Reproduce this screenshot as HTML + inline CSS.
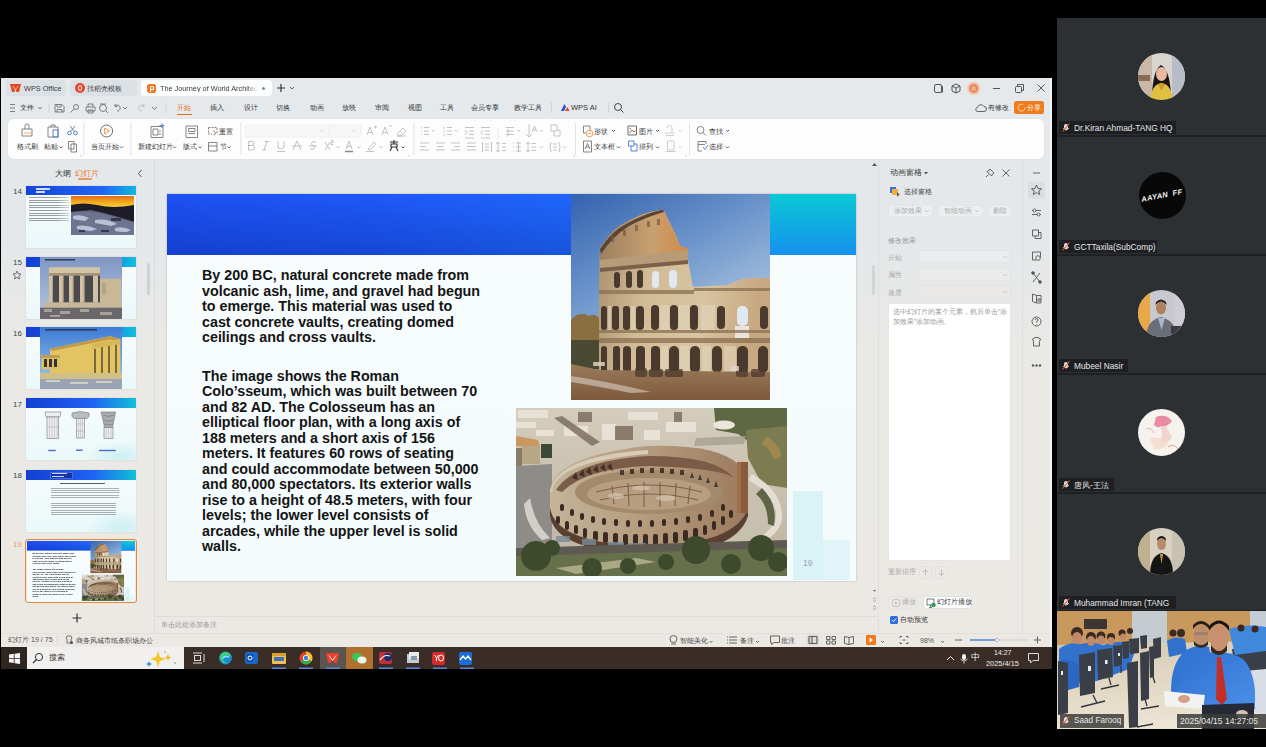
<!DOCTYPE html>
<html><head><meta charset="utf-8">
<style>
*{margin:0;padding:0;box-sizing:border-box}
html,body{width:1266px;height:747px;overflow:hidden;background:#000;font-family:"Liberation Sans",sans-serif;position:relative}
.a{position:absolute}
.t{position:absolute;white-space:nowrap;font-size:8px;color:#3a3a3a;line-height:1}
.st{position:absolute;left:35px;width:320px;font:bold 14.3px/15.5px "Liberation Sans",sans-serif;color:#141414;white-space:nowrap}
</style></head><body>
<!-- window bg -->
<div class="a" style="left:1px;top:78px;width:1051px;height:81px;background:#e5e9ec"></div>
<div class="a" style="left:1px;top:159px;width:1051px;height:488px;background:linear-gradient(180deg,#e4e8eb 0%,#e5e8ea 18%,#eae9e5 42%,#ece9e4 100%)"></div>
<!-- ribbon panel -->
<div class="a" style="left:8px;top:119px;width:1036px;height:40px;background:#fdfdfd;border-radius:5px;box-shadow:0 0 1px rgba(0,0,0,.18)"></div>

<!-- TITLE BAR -->
<div class="a" style="left:6px;top:80px;width:60px;height:16px;background:#dce1e5;border-radius:4px"></div>
<div class="a" style="left:70px;top:80px;width:68px;height:16px;background:#dce1e5;border-radius:4px"></div>
<div class="a" style="left:141px;top:80px;width:131px;height:16px;background:#fcfdfd;border-radius:4px"></div>
<svg class="a" style="left:10px;top:84px" width="11" height="8" viewBox="0 0 11 8"><path d="M0 0 L11 0 L9 8 L6.5 8 L5.5 4 L4.5 8 L2 8Z" fill="#e8412c"/><path d="M3 2 L5.5 6 L8 2" stroke="#f7c060" stroke-width="1" fill="none"/></svg>
<div class="t" style="left:24px;top:84.5px;font-size:7.3px;color:#3c3c3c">WPS Office</div>
<div class="a" style="left:75px;top:83px;width:10px;height:10px;border-radius:50%;background:#e5452f"></div>
<div class="a" style="left:78px;top:85px;width:4px;height:6px;border-radius:50%;border:1.2px solid #fde6d8"></div>
<div class="t" style="left:87px;top:84.5px;font-size:7.2px;color:#3c3c3c">找稻壳模板</div>
<div class="a" style="left:147px;top:84px;width:9px;height:9px;border-radius:2px;background:#ef7a22"></div>
<div class="a" style="left:149.5px;top:85.5px;width:4px;height:4px;border:1.2px solid #fff;border-radius:1px"></div>
<div class="a" style="left:149.5px;top:88px;width:1.2px;height:4px;background:#fff"></div>
<div class="t" style="left:160px;top:84.5px;font-size:7.3px;color:#3a3a3a;width:98px;overflow:hidden;-webkit-mask-image:linear-gradient(90deg,#000 88%,transparent)">The Journey of World Architecture</div>
<div class="a" style="left:262px;top:87px;width:3px;height:3px;border-radius:50%;background:#888"></div>
<svg class="a" style="left:276px;top:83px" width="22" height="10" viewBox="0 0 22 10"><path d="M5 1 V9 M1 5 H9" stroke="#333" stroke-width="1.2"/><path d="M14 4 L16 6 L18 4" stroke="#555" stroke-width=".9" fill="none"/></svg>
<svg class="a" style="left:930px;top:82px" width="120" height="13" viewBox="0 0 120 13">
<g stroke="#555" stroke-width="1" fill="none">
<rect x="4.5" y="2.5" width="7" height="8" rx="1.5"/><path d="M11.5 3.5 L12.5 4.5 V10 L11.5 11"/>
<path d="M26 2 L30 4 V9 L26 11 L22 9 V4Z M22 4 L26 6 L30 4 M26 6 V11"/>
<path d="M63 6.5 H70"/>
<rect x="85.5" y="4.5" width="6" height="6" rx="1"/><path d="M87.5 4.5 V2.5 H93.5 V8.5 H91.5"/>
<path d="M107.5 2.5 L114.5 9.5 M114.5 2.5 L107.5 9.5"/>
</g>
<circle cx="43.7" cy="6.4" r="6.5" fill="#f3c9a0"/><circle cx="43.7" cy="6.4" r="4.5" fill="#e7827a"/><circle cx="43.7" cy="6.4" r="2.5" fill="#f0b070"/>
</svg>
<svg class="a" style="left:975px;top:103px" width="12" height="10" viewBox="0 0 12 10"><path d="M3 8.5 H9 A2.5 2.5 0 0 0 9 3.5 A3.5 3.5 0 0 0 2.5 4.5 A2 2 0 0 0 3 8.5Z" stroke="#555" stroke-width=".9" fill="none"/></svg>
<div class="t" style="left:988px;top:103.5px;font-size:7.2px;color:#3a3a3a">有修改</div>
<div class="a" style="left:1014px;top:101px;width:30px;height:12.5px;background:#ef7b1d;border-radius:2.5px"></div>
<svg class="a" style="left:1017px;top:103px" width="9" height="9" viewBox="0 0 9 9"><path d="M6 1.5 A3.5 3.5 0 1 0 8 4.5" stroke="#fde0c0" stroke-width=".9" fill="none"/></svg>
<div class="t" style="left:1027px;top:103.5px;font-size:7.2px;color:#fff0e0">分享</div>
<div class="a" style="left:1050px;top:78px;width:2px;height:569px;background:#f1f3f4"></div>

<!-- MENU ROW -->
<svg class="a" style="left:8px;top:102px" width="165" height="12" viewBox="0 0 165 12">
<g stroke="#6a6a6a" stroke-width=".85" fill="none">
<path d="M2 2.5 H7 M2 6 H7 M2 9.5 H7"/>
<path d="M30 5 L32 7 L34 5" stroke="#666"/>
<path d="M41 1 V11" stroke="#ccd"/>
<path d="M47 2.5 H54 L56 4.5 V10 H47Z M49 2.5 V5 H53 V2.5 M49 10 V7.5 H54 V10"/>
<circle cx="68" cy="5" r="2.5"/><path d="M66 7 L62.5 10.5"/>
<path d="M78 5 H87 V9 H78Z M80 5 V2 H85 V5 M80 8 H85 V11 H80Z"/>
<circle cx="95" cy="6" r="3.5"/><path d="M97.5 8.5 L100 11 M92 2 H98"/>
<path d="M107 4 A3 3 0 1 1 109 9 M107 2 V4.5 H109.5"/>
<path d="M115 5 L117 7 L119 5" stroke="#666"/>
<path d="M136 4 A3 3 0 1 0 134 9 M136 2 V4.5 H133.5" stroke="#bbb"/>
<path d="M144 5 L146.5 7.5 L149 5" stroke="#666"/>
<path d="M158 1 V11" stroke="#ccd"/>
</g>
</svg>
<div class="t" style="left:20px;top:104px;font-size:7.2px;color:#333">文件</div>
<div class="t" style="left:177px;top:104px;font-size:7.2px;color:#e5691e">开始</div>
<div class="a" style="left:177px;top:113.5px;width:15px;height:1.5px;background:#e5691e;border-radius:1px"></div>
<div class="t" style="left:210px;top:104px;font-size:7.2px;color:#333">插入</div>
<div class="t" style="left:243.5px;top:104px;font-size:7.2px;color:#333">设计</div>
<div class="t" style="left:276px;top:104px;font-size:7.2px;color:#333">切换</div>
<div class="t" style="left:309.5px;top:104px;font-size:7.2px;color:#333">动画</div>
<div class="t" style="left:342px;top:104px;font-size:7.2px;color:#333">放映</div>
<div class="t" style="left:375px;top:104px;font-size:7.2px;color:#333">审阅</div>
<div class="t" style="left:408px;top:104px;font-size:7.2px;color:#333">视图</div>
<div class="t" style="left:440px;top:104px;font-size:7.2px;color:#333">工具</div>
<div class="t" style="left:471px;top:104px;font-size:7.2px;color:#333">会员专享</div>
<div class="t" style="left:514px;top:104px;font-size:7.2px;color:#333">教学工具</div>
<div class="a" style="left:551px;top:102px;width:1px;height:11px;background:#cfd4d8"></div>
<svg class="a" style="left:560px;top:103px" width="10" height="9" viewBox="0 0 10 9"><path d="M1 8 L4.5 1 L6 4 L4 8Z" fill="#2a50d8"/><path d="M5 8 L7.5 4 L9.5 8Z" fill="#e8403c"/></svg>
<div class="t" style="left:571px;top:104px;font-size:7.5px;color:#333">WPS AI</div>
<div class="a" style="left:608px;top:102px;width:1px;height:11px;background:#cfd4d8"></div>
<svg class="a" style="left:613px;top:102px" width="12" height="12" viewBox="0 0 12 12"><circle cx="5" cy="5" r="3.5" stroke="#444" stroke-width="1" fill="none"/><path d="M7.5 7.5 L10.5 10.5" stroke="#444" stroke-width="1"/></svg>
<!-- RIBBON -->
<svg class="a" style="left:8px;top:119px" width="1036" height="40" viewBox="0 0 1036 40">
<g stroke="#dfe2e5" stroke-width="1"><path d="M75.8 4 V36 M122.8 4 V36 M232.8 4 V36 M406 4 V36 M567.5 4 V36 M681.5 4 V36 M490 10 V20"/></g>
<g stroke="#707070" stroke-width=".85" fill="none">
<!-- format painter -->
<path d="M14 10 H24 V17 H14Z M17 10 V7 A2 2 0 0 1 21 7 V10"/><path d="M16 14 H24" stroke="#e8a040"/>
<!-- paste -->
<path d="M40 8 H50 V18 H40Z M43 8 V6 H47 V8"/><rect x="45" y="11" width="5" height="7" stroke="#3a6fd8"/>
<!-- cut -->
<circle cx="61.5" cy="14" r="1.8" stroke="#2f6fd6"/><circle cx="67.5" cy="14" r="1.8" stroke="#2f6fd6"/><path d="M62.5 12.5 L67 7 M66.5 12.5 L62 7"/>
<!-- copy -->
<path d="M60.5 22.5 H66 V30 H60.5Z M63 25 H68.5 V33 H63Z"/>
<!-- play -->
<circle cx="98.6" cy="12" r="6" stroke="#555"/><path d="M96.6 9 L101.4 12 L96.6 15Z" stroke="#ef8a30" fill="none"/>
<!-- new slide -->
<path d="M143 7.5 H155 V18.5 H143Z M145 10 H150 V16 H145Z M151 12 H153 M151 15 H153" /><path d="M154 4 V9 M151.5 6.5 H156.5" stroke="#3a7ae0"/>
<!-- layout -->
<path d="M178 7 H189.5 V18.5 H178Z M180.5 9.5 H187 V12.5 H180.5Z M180.5 14.5 H187"/>
<!-- reset -->
<path d="M200.5 8.5 H209 V15 M200.5 8.5 V15 H204" stroke-dasharray="2 1"/><path d="M205.5 11.5 L208 14.5 L205.5 16" />
<!-- section -->
<path d="M200.5 23.5 H209 V32 H200.5Z M200.5 27 H209"/>
<!-- A+ A- eraser -->
<path d="M359 16 L362 8 L365 16 M360 13.5 H364 M366 8 H369 M367.5 6.5 V9.5" stroke="#b8b8b8"/>
<path d="M374 16 L377 8 L380 16 M375 13.5 H379 M381 7 H384" stroke="#b8b8b8"/>
<path d="M390 14 L395 9 L398 12 L393 17 H390 Z M389 17 H398" stroke="#b8b8b8"/>
<!-- B I U A S x2 -->
<path d="M240.5 22.5 H244 A2 2 0 0 1 244 26.5 H240.5 M240.5 26.5 H244.5 A2.2 2.2 0 0 1 244.5 31 H240.5 V22.5" stroke="#b5b5b5"/>
<path d="M257 22.5 H261 M254 31 H258 M259 22.5 L256 31" stroke="#b5b5b5"/>
<path d="M270 22 V27 A3 3 0 0 0 276 27 V22 M269 32.5 H277" stroke="#b5b5b5"/>
<path d="M285 31 L289 22 L293 31 M284 27 H294" stroke="#b5b5b5"/>
<path d="M308 23.5 A2.5 2 0 1 0 305 26.5 A2.5 2 0 1 1 302 29.5 M301 27 H309" stroke="#b5b5b5"/>
<path d="M317 23 L322 31 M322 23 L317 31 M323 21.5 H325 V23.5 H323 V25.5 H325" stroke="#b5b5b5"/>
<path d="M338 30 L341 22 L344 30 M339 27.5 H343" stroke="#b5b5b5"/><path d="M337 32.5 H345" stroke="#888" stroke-width="1.5"/>
<path d="M360 30 L366 23 L368 25 L362 31Z M358 32.5 H366" stroke="#b8b8b8"/>
<path d="M382 23 H390 M386 21 V25 M383 25 H389 V28 H383Z M384 28 L382 32 M388 28 L390 32" stroke="#333" stroke-width="1.1"/>
<!-- chevrons -->
<path d="M51.5 27.5 L53 29 L54.5 27.5 M112 27.5 L113.5 29 L115 27.5 M165 27.5 L166.5 29 L168 27.5 M190.5 27.5 L192 29 L193.5 27.5 M219.5 27.5 L221 29 L222.5 27.5" stroke="#555" stroke-width=".9"/>
<path d="M328.5 27.5 L330 29 L331.5 27.5 M349.5 27.5 L351 29 L352.5 27.5 M371.5 27.5 L373 29 L374.5 27.5" stroke="#bbb" stroke-width=".9"/>
<path d="M393.5 27.5 L395 29 L396.5 27.5" stroke="#444" stroke-width=".9"/>
<path d="M312 9 L314 11 L316 9 M346 9 L348 11 L350 9" stroke="#ccc" stroke-width=".8"/>
<!-- paragraph -->
<g stroke="#b8b8b8">
<path d="M413 8.5 H414 M413 12 H414 M413 15.5 H414 M416 8.5 H421 M416 12 H421 M416 15.5 H421"/>
<path d="M436 8 V10 M436 11.5 V13.5 M436 15 V17 M439 8.5 H444 M439 12 H444 M439 15.5 H444"/>
<path d="M457 8.5 H466 M461 12 H466 M461 15.5 H466 M457 19 H466 M457 11 L459 13.5 L457 16"/>
<path d="M473 8.5 H482 M477 12 H482 M477 15.5 H482 M473 19 H482 M475 11 L473 13.5 L475 16"/>
<path d="M498 8.5 H506 M498 12 H506 M498 15.5 H506 M500 10 V17"/>
<path d="M521 5 V18 M518 15 L521 18 L524 15 M524 13 L526.5 7 L529 13 M525 11 H528"/>
<path d="M543 6 H549 V12 H543Z M546 12 V17 H552 V11 H549"/>
<path d="M412 24 H421 M412 27.5 H418 M412 31 H421"/>
<path d="M428 24 H437 M429.5 27.5 H435.5 M428 31 H437"/>
<path d="M443 24 H452 M446 27.5 H452 M443 31 H452"/>
<path d="M459 24 H468 M459 27.5 H468 M459 31 H468"/>
<path d="M474.5 23 V33 M483.5 23 V33 M477 25 H481 M477 28 H481 M477 31 H481"/>
<path d="M490 23 V33 M488 25 L490 23 L492 25 M488 31 L490 33 L492 31 M494 24.5 H498 M494 28 H498 M494 31.5 H498"/>
<path d="M505 24 H506 M505 28 H506 M505 32 H506 M508 24 H513 M508 28 H513 M508 32 H513 M510.5 23 V33"/>
<path d="M520 23 V33 M518 25 L520 23 L522 25 M518 31 L520 33 L522 31 M523.5 24.5 H528 M523.5 28 H528 M523.5 31.5 H528"/>
<path d="M543 23 Q541 28 543 33 M551 23 Q553 28 551 33 M545 25 H549 M545 28 H549 M545 31 H549"/>
</g>
<path d="M424 11 L425.5 12.5 L427 11 M447 11 L448.5 12.5 L450 11 M509 11 L510.5 12.5 L512 11 M532 11 L533.5 12.5 L535 11 M532 27.5 L533.5 29 L535 27.5 M555 27.5 L556.5 29 L558 27.5" stroke="#bbb" stroke-width=".9"/>
<!-- insert -->
<path d="M575.5 7 H582 V11 M575.5 7 V14 H578"/><circle cx="581.5" cy="14.5" r="3.3" stroke="#ef8a30"/><path d="M580 14.5 H583" stroke="#ef8a30"/>
<path d="M620 7 H628.5 V16 H620Z M621.5 14 L624 11 L626 13 L627.5 11.5" stroke="#555"/><circle cx="622.3" cy="9.5" r=".8" fill="#e07030" stroke="none"/>
<path d="M659 9 A2.5 2.5 0 0 1 664 9 V13 M658 16.5 H666 M657 14 H667" stroke="#c5c5c5"/>
<path d="M575.5 22 H583.5 V33 H575.5Z M577 30 L579.5 24.5 L582 30 M578 28 H581"/>
<path d="M620.5 22 H626 V27 H620.5Z M623 27 V32 H629 V25 H626" stroke="#3a6fd8"/>
<path d="M659.5 22 H666 V31 H659.5Z M657.5 32.5 H668" stroke="#c5c5c5"/>
<path d="M604 11 L605.5 12.5 L607 11 M648 11 L649.5 12.5 L651 11 M609 27.5 L610.5 29 L612 27.5 M648 27.5 L649.5 29 L651 27.5 M718 11 L719.5 12.5 L721 11 M718 27.5 L719.5 29 L721 27.5" stroke="#444" stroke-width=".9"/>
<path d="M671 11 L672.5 12.5 L674 11 M671 27.5 L672.5 29 L674 27.5" stroke="#ccc" stroke-width=".9"/>
<!-- find/select -->
<circle cx="692.5" cy="11" r="3.5"/><path d="M695 13.5 L698 16.5"/>
<path d="M690 22.5 H698 V25 M690 22.5 V32 H694 M690 25.5 H697"/><path d="M695 28 L697 30.5 L700 26" stroke="#3a7ae0"/>
</g>
<rect x="237" y="6" width="84" height="12" fill="#f6f7f6" stroke="#eef0ef" rx="1.5"/>
<rect x="321" y="6" width="32" height="12" fill="#f6f7f6" stroke="#eef0ef" rx="1.5"/>
<path d="M312 11 L314 13 L316 11 M344 11 L346 13 L348 11" stroke="#d5d5d5" stroke-width=".8" fill="none"/>
<path d="M72 36 L74 38 M400 36 L402 38 M565 36 L567 38 M677 36 L679 38" stroke="#bbb" stroke-width=".7"/>
</svg>
<div class="t" style="left:17px;top:142.5px;font-size:7px;color:#333">格式刷</div>
<div class="t" style="left:44px;top:142.5px;font-size:7px;color:#333">粘贴</div>
<div class="t" style="left:91px;top:142.5px;font-size:7px;color:#333">当页开始</div>
<div class="t" style="left:138px;top:142.5px;font-size:7px;color:#333">新建幻灯片</div>
<div class="t" style="left:182.5px;top:142.5px;font-size:7px;color:#333">版式</div>
<div class="t" style="left:218.5px;top:127.5px;font-size:7px;color:#333">重置</div>
<div class="t" style="left:219.5px;top:142.5px;font-size:7px;color:#333">节</div>
<div class="t" style="left:594px;top:127.5px;font-size:7px;color:#333">形状</div>
<div class="t" style="left:639px;top:127.5px;font-size:7px;color:#333">图片</div>
<div class="t" style="left:594px;top:142.5px;font-size:7px;color:#333">文本框</div>
<div class="t" style="left:639px;top:142.5px;font-size:7px;color:#333">排列</div>
<div class="t" style="left:708.5px;top:127.5px;font-size:7px;color:#333">查找</div>
<div class="t" style="left:709px;top:142.5px;font-size:7px;color:#333">选择</div>

<!-- SLIDE -->
<div class="a" id="slide" style="left:167px;top:194px;width:689px;height:387px;background:linear-gradient(180deg,#f8fcfd,#f3fbfc);box-shadow:0 0 2px rgba(0,0,0,.22)">
  <div class="a" style="left:0;top:0;width:689px;height:60.5px;background:linear-gradient(180deg,rgba(40,90,255,.25),rgba(0,10,90,.22)),linear-gradient(90deg,#1a4ef0 0%,#1b58f6 30%,#1d68fd 55%,#1f74fa 80%)"></div>
  <div class="a" style="left:560px;top:0;width:129px;height:60.5px;background:linear-gradient(180deg,#0bc9d6 0%,#0fa9e3 55%,#1690ee 100%);-webkit-mask-image:linear-gradient(90deg,transparent 0,#000 33%)"></div>
  <div class="a" style="left:626px;top:297px;width:30px;height:89px;background:#d2f1f4;opacity:.8"></div>
  <div class="a" style="left:656px;top:346px;width:27px;height:40px;background:#dcf4f6;opacity:.8"></div>
  <div class="t" style="left:636px;top:365px;font-size:8.5px;color:#9aa4b8">19</div>
<svg class="a" style="left:404px;top:0;filter:blur(.35px)" width="199" height="206" viewBox="0 0 199 206">
<defs>
<linearGradient id="sky1" x1="0" y1="0" x2="0.5" y2="1"><stop offset="0" stop-color="#3463b0"/><stop offset=".45" stop-color="#6f98cc"/><stop offset="1" stop-color="#c8d8ea"/></linearGradient>
<linearGradient id="bld1" x1="0" y1="0" x2="1" y2="0.2"><stop offset="0" stop-color="#a48a68"/><stop offset=".35" stop-color="#d2bc96"/><stop offset=".7" stop-color="#d8c4a2"/><stop offset="1" stop-color="#c8a880"/></linearGradient>
<linearGradient id="top1" x1="0" y1="0" x2="1" y2="0"><stop offset="0" stop-color="#9c8060"/><stop offset=".6" stop-color="#c8a070"/><stop offset="1" stop-color="#d08848"/></linearGradient>
<linearGradient id="grd1" x1="0" y1="0" x2="0" y2="1"><stop offset="0" stop-color="#9a7a5c"/><stop offset="1" stop-color="#7e5a3c"/></linearGradient>
</defs>
<rect width="199" height="206" fill="url(#sky1)"/>
<path d="M0 126 Q8 116 18 122 Q24 118 30 126 L30 150 L0 150Z" fill="#8a7040"/>
<path d="M0 146 L30 146 L30 176 L0 172Z" fill="#4a4a34"/>
<path d="M28 178 L28 92 Q28 70 29 54 Q38 40 47 33 Q60 25 71 20.5 Q82 17 91 15.8 L93 17 L104 39.5 L109 52 L117 54.5 L117 66 L121.6 91.6 L123 93 L155.6 91 L172 84.5 L199 83.7 L199 182 L28 182Z" fill="url(#bld1)"/>
<path d="M29 56 Q38 40 47 33 Q60 25 71 20.5 Q82 17 91 15.8 L93 17 L104 39.5 L109 52 L117 54.5 L117 66 L29 74Z" fill="url(#top1)"/>
<path d="M29 55 Q40 38 55 30 Q75 19 92 15.5 L93 18 Q75 23 58 32 Q42 42 30 60Z" fill="#5a4434"/>
<g fill="#7a5a40" opacity=".7"><rect x="40" y="42" width="3" height="6"/><rect x="52" y="36" width="3" height="6"/><rect x="64" y="31" width="3" height="6"/><rect x="76" y="27" width="3" height="6"/><rect x="86" y="25" width="3" height="6"/></g>
<path d="M29 66 L117 56 L117 66 L29 76Z" fill="#b89c78"/>
<path d="M29 74 L117 66 L117 70 L29 78Z" fill="#7a6048"/>
<g fill="#4a3a2e">
<rect x="43" y="78" width="6" height="16" rx="3"/><rect x="55" y="77" width="6" height="17" rx="3"/><rect x="66" y="76" width="6" height="18" rx="3"/>
<rect x="30" y="112" width="6" height="24" rx="3"/><rect x="41" y="112" width="7" height="24" rx="3"/><rect x="52" y="112" width="7" height="24" rx="3"/><rect x="65" y="112" width="8" height="24" rx="4"/><rect x="80" y="111" width="8" height="25" rx="4"/><rect x="99" y="111" width="8" height="25" rx="4"/><rect x="119" y="111" width="8" height="25" rx="4"/><rect x="146" y="112" width="8" height="23" rx="4"/><rect x="189" y="112" width="8" height="23" rx="4"/>
<rect x="30" y="152" width="6" height="27" rx="3"/><rect x="42" y="152" width="7" height="27" rx="3"/><rect x="52" y="152" width="8" height="27" rx="4"/><rect x="65" y="152" width="9" height="27" rx="4"/><rect x="80" y="152" width="9" height="27" rx="4"/><rect x="98" y="152" width="10" height="27" rx="5"/><rect x="119" y="152" width="10" height="27" rx="5"/><rect x="141" y="152" width="10" height="27" rx="5"/><rect x="166" y="152" width="11" height="27" rx="5"/><rect x="187" y="152" width="10" height="27" rx="5"/>
</g>
<g fill="#e0e8f0"><rect x="81" y="77" width="7" height="17" rx="3.5"/><rect x="98" y="76" width="8" height="18" rx="4"/><rect x="166" y="112" width="11" height="20" rx="5"/></g>
<rect x="164" y="132" width="14" height="12" fill="#e8e4dc"/>
<g fill="#8a7052" opacity=".75"><rect x="28" y="136" width="171" height="3"/><rect x="28" y="144" width="171" height="5"/><rect x="28" y="96" width="95" height="4"/><rect x="123" y="94" width="76" height="3"/></g>
<g fill="#e4d6bc" opacity=".6"><rect x="37" y="112" width="3" height="24"/><rect x="60" y="112" width="4" height="24"/><rect x="89" y="111" width="9" height="25"/><rect x="108" y="111" width="10" height="25"/><rect x="130" y="111" width="14" height="25"/><rect x="90" y="152" width="7" height="27"/><rect x="109" y="152" width="9" height="27"/><rect x="131" y="152" width="9" height="27"/><rect x="153" y="152" width="12" height="27"/></g>
<path d="M0 170 L28 176 L199 178 L199 206 L0 206Z" fill="url(#grd1)"/>
<path d="M0 182 Q40 188 80 198 L60 199 Q25 192 0 188Z" fill="#d4c8bc" opacity=".65"/>
<g fill="#4a3a2a" opacity=".75"><rect x="64" y="174" width="12" height="9" rx="2"/><rect x="78" y="175" width="14" height="8" rx="2"/><rect x="94" y="175" width="18" height="8" rx="2"/><rect x="165" y="175" width="12" height="8" rx="2"/><rect x="180" y="175" width="14" height="8" rx="2"/></g>
<g fill="#e0d8d0" opacity=".8"><rect x="22" y="168" width="12" height="4" rx="1"/><rect x="160" y="172" width="8" height="5" rx="1"/></g>
</svg>
<svg class="a" style="left:349px;top:214px;filter:blur(.35px)" width="271" height="168" viewBox="0 0 271 168">
<defs>
<linearGradient id="city2" x1="0" y1="0" x2="0" y2="1"><stop offset="0" stop-color="#d4ccbc"/><stop offset="1" stop-color="#bdb3a2"/></linearGradient>
<linearGradient id="rim2" x1="0" y1="0" x2="1" y2="0"><stop offset="0" stop-color="#c4b49a"/><stop offset=".5" stop-color="#b49a7c"/><stop offset="1" stop-color="#9c7a5e"/></linearGradient>
</defs>
<rect width="271" height="168" fill="url(#city2)"/>
<g fill="#e8e2d6"><rect x="2" y="2" width="30" height="8"/><rect x="0" y="14" width="20" height="6"/><rect x="20" y="22" width="18" height="6"/><rect x="48" y="18" width="24" height="10"/><rect x="86" y="16" width="14" height="16"/><rect x="112" y="4" width="30" height="8"/><rect x="150" y="14" width="30" height="10"/><rect x="128" y="22" width="16" height="10"/></g>
<g fill="#7a6a5a" opacity=".8"><path d="M38 10 L46 8 L84 34 L76 38Z"/><rect x="62" y="4" width="14" height="10"/><rect x="99" y="18" width="18" height="14"/><rect x="158" y="4" width="8" height="10"/><rect x="0" y="40" width="6" height="18"/></g>
<path d="M0 28 L22 32 L24 40 L0 38Z" fill="#c89860"/>
<rect x="6" y="38" width="18" height="18" fill="#b8a888"/>
<rect x="25" y="36" width="11" height="14" fill="#3a4a38"/>
<path d="M198 0 L271 0 L271 40 L236 36 L222 26 L200 22Z" fill="#5e6844"/>
<path d="M230 22 L271 18 L271 80 L246 76 L232 50Z" fill="#7c7c52"/>
<path d="M250 28 Q262 34 266 48 L258 52 Q254 40 246 36Z" fill="#a88a50" opacity=".8"/>
<ellipse cx="208" cy="17" rx="11" ry="4.5" fill="#ece6da"/>
<path d="M180 30 L230 28 L228 36 L178 38Z" fill="#a4a090" opacity=".8"/>
<path d="M0 58 L36 56 L36 142 L0 146Z" fill="#8e8c88"/>
<path d="M14 90 Q18 115 34 130 L26 132 Q10 118 8 96Z" fill="#dcdad4" opacity=".85"/>
<path d="M218 86 Q250 88 264 100 Q270 118 250 132 L200 142 L214 110Z" fill="#c8c0ae"/>
<path d="M236 66 Q268 84 266 112 Q262 130 236 138 L230 136 Q256 126 260 110 Q262 88 232 72Z" fill="#e4ded2"/>
<path d="M246 80 Q262 96 258 118 L252 116 Q252 96 240 86Z" fill="#5e6444"/>
<path d="M34 84 Q36 48 132 38 Q200 36 222 56 L232 100 Q220 136 133 138 Q40 136 34 100Z" fill="url(#rim2)"/>
<path d="M34 100 Q40 136 133 138 Q220 136 232 100 L232 108 Q220 146 133 146 Q40 144 34 108Z" fill="#5a4030"/>
<g fill="#3a2a22">
<rect x="40" y="108" width="4" height="8" rx="2"/><rect x="49" y="113" width="4" height="9" rx="2"/><rect x="58" y="117" width="4" height="9" rx="2"/><rect x="67" y="120" width="4" height="10" rx="2"/><rect x="77" y="123" width="5" height="10" rx="2"/><rect x="87" y="124" width="5" height="11" rx="2"/><rect x="97" y="125" width="5" height="11" rx="2"/><rect x="107" y="126" width="5" height="11" rx="2"/><rect x="117" y="126" width="5" height="11" rx="2"/><rect x="127" y="126" width="5" height="11" rx="2"/><rect x="137" y="126" width="5" height="11" rx="2"/><rect x="147" y="125" width="5" height="11" rx="2"/><rect x="157" y="124" width="5" height="11" rx="2"/><rect x="167" y="122" width="5" height="11" rx="2"/><rect x="177" y="120" width="5" height="10" rx="2"/><rect x="187" y="117" width="4" height="10" rx="2"/><rect x="196" y="113" width="4" height="9" rx="2"/><rect x="205" y="108" width="4" height="9" rx="2"/><rect x="213" y="102" width="4" height="8" rx="2"/>
<rect x="44" y="96" width="4" height="7" rx="2"/><rect x="54" y="101" width="4" height="7" rx="2"/><rect x="64" y="105" width="4" height="7" rx="2"/><rect x="75" y="108" width="4" height="7" rx="2"/><rect x="86" y="110" width="4" height="7" rx="2"/><rect x="98" y="111" width="4" height="7" rx="2"/><rect x="110" y="112" width="4" height="7" rx="2"/><rect x="122" y="112" width="4" height="7" rx="2"/><rect x="134" y="112" width="4" height="7" rx="2"/><rect x="146" y="111" width="4" height="7" rx="2"/><rect x="158" y="110" width="4" height="7" rx="2"/><rect x="170" y="108" width="4" height="7" rx="2"/><rect x="182" y="106" width="4" height="7" rx="2"/><rect x="194" y="102" width="4" height="7" rx="2"/><rect x="205" y="96" width="4" height="7" rx="2"/>
</g>
<path d="M40 82 Q60 52 133 48 Q200 48 218 70 Q205 60 133 58 Q70 60 46 84Z" fill="#7a5c48"/>
<ellipse cx="133" cy="84" rx="74" ry="22" fill="#a48a6c"/>
<ellipse cx="133" cy="86" rx="62" ry="16" fill="#b89e80"/>
<g stroke="#6a5040" stroke-width="1.1" fill="none" opacity=".8"><path d="M80 84 Q133 70 186 84 M84 92 Q133 80 182 92 M96 78 L98 96 M112 75 L113 98 M128 74 L128 99 M144 74 L144 99 M160 75 L159 98 M174 78 L172 96"/></g><g fill="#e0d2bc" opacity=".55"><ellipse cx="100" cy="88" rx="8" ry="3"/><ellipse cx="150" cy="90" rx="10" ry="3"/><ellipse cx="125" cy="80" rx="9" ry="2.5"/></g>
<g fill="#3a2a22" opacity=".85"><path d="M56 70 L60 64 L62 72Z M63 67 L67 61 L69 69Z M70 64 L74 59 L76 67Z M77 62 L81 57 L83 65Z M84 60 L88 56 L90 64Z M91 59 L95 55 L97 63Z"/><rect x="104" y="62" width="4" height="5"/><rect x="114" y="61" width="4" height="5"/><rect x="124" y="60" width="4" height="5"/><rect x="134" y="60" width="4" height="5"/><rect x="144" y="60" width="4" height="5"/><rect x="154" y="61" width="4" height="5"/><rect x="164" y="62" width="4" height="5"/><path d="M176 64 L178 70 L174 70Z M184 66 L186 72 L182 72Z M192 69 L194 75 L190 75Z M200 73 L202 79 L198 79Z"/></g>
<path d="M36 84 Q38 54 132 46 L132 42 Q40 48 34 84Z" fill="#d8ccb8"/>
<rect x="221" y="54" width="11" height="51" fill="#8a5a3c"/><rect x="221" y="54" width="4" height="51" fill="#a06e4a"/>
<g fill="#7a8a9a" opacity=".8"><rect x="40" y="128" width="14" height="6"/><rect x="66" y="131" width="14" height="6"/><rect x="92" y="134" width="16" height="6"/><rect x="112" y="135" width="18" height="6"/></g>
<path d="M0 140 L271 132 L271 142 L0 150Z" fill="#5e5a52"/>
<path d="M0 148 L271 140 L271 168 L0 168Z" fill="#66704a"/>
<path d="M40 160 L120 150 L140 154 L60 166Z" fill="#c8c0a0" opacity=".7"/>
<g fill="#3e4a2c"><circle cx="20" cy="148" r="15"/><circle cx="36" cy="140" r="8"/><circle cx="76" cy="160" r="10"/><circle cx="112" cy="158" r="8"/><circle cx="150" cy="154" r="8"/><circle cx="180" cy="142" r="14"/><circle cx="215" cy="156" r="10"/><circle cx="245" cy="140" r="13"/><circle cx="262" cy="154" r="10"/></g>
</svg>

<div class="st" style="top:74px">By 200 BC, natural concrete made from<br>volcanic ash, lime, and gravel had begun<br>to emerge. This material was used to<br>cast concrete vaults, creating domed<br>ceilings and cross vaults.</div>
<div class="st" style="top:174.5px">The image shows the Roman<br>Colo’sseum, which was built between 70<br>and 82 AD. The Colosseum has an<br>elliptical floor plan, with a long axis of<br>188 meters and a short axis of 156<br>meters. It features 60 rows of seating<br>and could accommodate between 50,000<br>and 80,000 spectators. Its exterior walls<br>rise to a height of 48.5 meters, with four<br>levels; the lower level consists of<br>arcades, while the upper level is solid<br>walls.</div>

</div>
<!-- LEFT PANEL -->
<div class="a" style="left:154px;top:159px;width:1px;height:474px;background:#dadddf"></div>
<div class="t" style="left:55px;top:169.5px;font-size:7.5px;color:#333">大纲</div>
<div class="t" style="left:75px;top:169.5px;font-size:7.5px;color:#e97a2c">幻灯片</div>
<div class="a" style="left:78px;top:178px;width:14px;height:1.5px;background:#e99a5c;border-radius:1px"></div>
<svg class="a" style="left:137px;top:169px" width="6" height="9" viewBox="0 0 6 9"><path d="M4.5 1 L1.5 4.5 L4.5 8" stroke="#555" stroke-width="1" fill="none"/></svg>
<div class="a" style="left:147px;top:263px;width:3px;height:32px;background:#cfd2d4;border-radius:2px"></div>
<div class="t" style="left:13px;top:188px;font-size:8px;color:#444">14</div>
<div class="t" style="left:13px;top:259px;font-size:8px;color:#444">15</div>
<svg class="a" style="left:12px;top:270px" width="10" height="10" viewBox="0 0 10 10"><path d="M5 1 L6.2 3.8 L9 4 L6.8 6 L7.5 9 L5 7.4 L2.5 9 L3.2 6 L1 4 L3.8 3.8Z" stroke="#555" stroke-width=".8" fill="none"/></svg>
<div class="t" style="left:13px;top:329.5px;font-size:8px;color:#444">16</div>
<div class="t" style="left:13px;top:400.5px;font-size:8px;color:#444">17</div>
<div class="t" style="left:13px;top:471.5px;font-size:8px;color:#444">18</div>
<div class="t" style="left:13px;top:541px;font-size:8px;color:#e9a060">19</div>
<svg class="a" style="left:72px;top:613px" width="10" height="10" viewBox="0 0 10 10"><path d="M5 0.5 V9.5 M0.5 5 H9.5" stroke="#333" stroke-width="1.2"/></svg>

<!-- thumb 14 -->
<div class="a" style="left:26px;top:186px;width:110px;height:62px;background:linear-gradient(180deg,#f8fcfd,#eaf8f9);box-shadow:0 0 1px rgba(0,0,0,.2);overflow:hidden">
  <div class="a" style="left:0;top:0;width:110px;height:9px;background:linear-gradient(90deg,#1544d8,#1f66f5 70%,#10b8e0)"></div>
  <div class="a" style="left:10px;top:2px;width:14px;height:1.5px;background:#cfdcff"></div><div class="a" style="left:10px;top:5px;width:9px;height:1.5px;background:#cfdcff"></div>
  <svg class="a" style="left:45px;top:10px" width="63" height="39" viewBox="0 0 63 39"><defs><linearGradient id="t14s" x1="0" y1="0" x2="0" y2="1"><stop offset="0" stop-color="#e86a18"/><stop offset=".6" stop-color="#f4b020"/><stop offset="1" stop-color="#f6d040"/></linearGradient></defs><rect width="63" height="39" fill="#5a6078"/><rect width="63" height="11" fill="url(#t14s)"/><path d="M0 9 Q12 6 26 9 Q42 13 63 9 L63 26 Q40 18 20 14 L0 16Z" fill="#1e1c26"/><path d="M0 16 Q20 14 40 20 Q55 24 63 26 L63 39 L0 39Z" fill="#6c7490"/><g fill="#c8cee0" opacity=".85"><path d="M2 20 Q10 18 18 22 L14 25 Q6 24 2 23Z"/><path d="M24 24 Q36 22 46 28 L40 30 Q30 28 24 27Z"/><path d="M6 30 Q16 28 26 33 L20 35 Q10 34 6 33Z"/><path d="M44 32 Q52 30 60 34 L56 36 Q48 36 44 35Z"/></g><g fill="#2a2a36" opacity=".8"><rect x="40" y="22" width="10" height="3"/><rect x="8" y="34" width="6" height="2"/><rect x="30" y="34" width="8" height="2"/></g></svg>
  <div class="a" style="left:3px;top:11px;width:40px;height:25px;background:repeating-linear-gradient(180deg,#444 0 1px,transparent 1px 2.6px);opacity:.5;-webkit-mask-image:linear-gradient(90deg,#000 70%,rgba(0,0,0,.4))"></div>
</div>
<!-- thumb 15 -->
<div class="a" style="left:26px;top:256.5px;width:110px;height:62px;background:linear-gradient(180deg,#f8fcfd,#eaf8f9);box-shadow:0 0 1px rgba(0,0,0,.2);overflow:hidden">
  <div class="a" style="left:0;top:0;width:110px;height:10px;background:linear-gradient(90deg,#1240d2,#1f62f2 60%,#10c0d8)"></div>
  <svg class="a" style="left:14px;top:0" width="82" height="62" viewBox="0 0 82 62"><defs><linearGradient id="t15" x1="0" y1="0" x2="0" y2="1"><stop offset="0" stop-color="#7e96c4"/><stop offset="1" stop-color="#b8c8dc"/></linearGradient></defs>
  <rect width="82" height="62" fill="url(#t15)"/>
  <rect x="5" y="2" width="30" height="1.6" fill="#2a2a40" opacity=".8"/>
  <rect x="60" y="21.7" width="21" height="25" fill="#c8b898"/><rect x="62" y="26" width="4" height="12" fill="#a89878" opacity=".6"/>
  <path d="M8.8 10.3 H60 V18.6 H8.8Z" fill="#d4c4a6"/><path d="M8.8 16 H60 V18.6 H8.8Z" fill="#a89474"/>
  <rect x="9" y="18.6" width="51" height="27" fill="#4a4a4e"/>
  <g fill="#d2c2a4"><rect x="9" y="18.6" width="4" height="27"/><rect x="19" y="18.6" width="4.5" height="27"/><rect x="29" y="18.6" width="4.5" height="27"/><rect x="40" y="18.6" width="4.5" height="27"/><rect x="53" y="18.6" width="5" height="27"/></g>
  <g fill="#a89478" opacity=".7"><rect x="12" y="20" width="1" height="25"/><rect x="22.5" y="20" width="1" height="25"/><rect x="32.5" y="20" width="1" height="25"/><rect x="43.5" y="20" width="1" height="25"/></g>
  <rect x="4" y="45.5" width="78" height="5.2" fill="#c8b898"/>
  <rect y="50.7" width="82" height="11.3" fill="#6a686a"/>
  <g fill="#b8b0a4" opacity=".8"><rect x="4" y="52" width="8" height="3"/><rect x="20" y="54" width="10" height="3"/><rect x="40" y="52" width="9" height="3"/><rect x="60" y="55" width="12" height="3"/><rect x="10" y="58" width="10" height="2"/></g></svg>
</div>
<!-- thumb 16 -->
<div class="a" style="left:26px;top:327px;width:110px;height:62px;background:linear-gradient(180deg,#f8fcfd,#eaf8f9);box-shadow:0 0 1px rgba(0,0,0,.2);overflow:hidden">
  <div class="a" style="left:0;top:0;width:110px;height:10px;background:linear-gradient(90deg,#1240d2,#1f62f2 60%,#10c0d8)"></div>
  <svg class="a" style="left:14px;top:0" width="82" height="62" viewBox="0 0 82 62"><defs><linearGradient id="t16" x1="0" y1="0" x2="0" y2="1"><stop offset="0" stop-color="#3c7cd4"/><stop offset="1" stop-color="#a8ccf0"/></linearGradient></defs>
  <rect width="82" height="62" fill="url(#t16)"/>
  <rect x="5" y="2" width="52" height="1.6" fill="#2a2a40" opacity=".8"/>
  <path d="M10 21.7 L70 9.3 L80.3 12 L80.3 48.7 L10 48.7Z" fill="#e2c462"/>
  <path d="M10 21.7 L70 9.3 L80.3 12 L80.3 15 L70 12.5 L12 24Z" fill="#c09a48"/>
  <g fill="#7a6a3a"><rect x="54" y="22" width="2" height="25"/><rect x="61" y="20" width="2" height="27"/><rect x="68" y="18" width="2" height="29"/><rect x="75" y="17" width="2" height="30"/></g>
  <path d="M52 17 L80.3 12 V17 L52 22Z" fill="#d8b858"/>
  <rect x="1.5" y="28" width="18.5" height="14.5" fill="#d8c070"/><rect x="1.5" y="28" width="18.5" height="3" fill="#c0a050"/>
  <g fill="#3a3428"><rect x="4" y="32" width="3" height="8"/><rect x="9" y="32" width="3" height="8"/><rect x="14" y="32" width="3" height="8"/></g>
  <rect y="46" width="82" height="8" fill="#d0c088"/>
  <rect y="52" width="82" height="10" fill="#9aa4b4"/>
  <g fill="#e8e0c0" opacity=".7"><rect x="6" y="53" width="14" height="2"/><rect x="30" y="55" width="18" height="2"/><rect x="56" y="54" width="16" height="2"/></g></svg>
</div>
<!-- thumb 17 -->
<div class="a" style="left:26px;top:398px;width:110px;height:62px;background:linear-gradient(180deg,#f8fcfd,#eaf8f9);box-shadow:0 0 1px rgba(0,0,0,.2);overflow:hidden">
  <div class="a" style="left:0;top:0;width:110px;height:10px;background:linear-gradient(90deg,#1240d2,#1f62f2 60%,#10c0d8)"></div>
  <div class="a" style="left:60px;top:44px;width:50px;height:18px;background:radial-gradient(ellipse at 70% 80%,#cdeff2,transparent 70%)"></div>
  <svg class="a" style="left:0;top:0" width="110" height="62" viewBox="0 0 110 62"><g stroke="#777" stroke-width=".6" fill="#eceef0">
  <path d="M19 14 H35 L34 19 H20Z"/><rect x="21" y="19" width="11.5" height="21.5"/>
  <path d="M46 15 Q54 12 63 15 Q64 19 61 20.5 H48 Q45 19 46 15Z" fill="#b8bcc2"/><rect x="50.7" y="20.4" width="7.8" height="19.6"/>
  <path d="M75 14 H89.7 L88 22 L86.5 29.6 H78.5 L77 22Z" fill="#a8acb2"/><rect x="78" y="29.6" width="9" height="11"/></g>
  <g stroke="#999" stroke-width=".4"><path d="M23.5 19 V40 M26 19 V40 M28.5 19 V40 M31 19 V40 M21 29 H32.5 M52.7 20 V40 M54.6 20 V40 M56.5 20 V40 M50.7 26 H58.5 M50.7 33 H58.5 M80 30 V40 M82.5 30 V40 M85 30 V40"/></g>
  <g stroke="#666" stroke-width=".5" fill="none"><path d="M77 17 Q82 20 88 17 M77.5 22 Q82 25 87.5 22 M78 26 Q82 28 87 26"/></g>
  <g fill="#4a6ed0"><rect x="22.3" y="51.8" width="7.4" height="1.4"/><rect x="50" y="51.5" width="6.7" height="1.4"/><rect x="73" y="51.8" width="16.7" height="1.4"/></g></svg>
</div>
<!-- thumb 18 -->
<div class="a" style="left:26px;top:469.5px;width:110px;height:62px;background:linear-gradient(180deg,#f8fcfd,#eaf8f9);box-shadow:0 0 1px rgba(0,0,0,.2);overflow:hidden">
  <div class="a" style="left:0;top:0;width:110px;height:10px;background:linear-gradient(90deg,#1240d2,#1f62f2 60%,#10c0d8)"></div>
  <div class="a" style="left:60px;top:40px;width:50px;height:22px;background:radial-gradient(ellipse at 70% 80%,#cdeff2,transparent 70%)"></div>
  <div class="a" style="left:23.5px;top:2px;width:23.5px;height:7px;background:#1634a0;border:.5px solid #4a6ae0"></div>
  <div class="a" style="left:25.5px;top:3.5px;width:15px;height:1.2px;background:#c8d4ff"></div><div class="a" style="left:25.5px;top:6px;width:12px;height:1.2px;background:#c8d4ff"></div>
  <div class="a" style="left:33.5px;top:13px;width:45px;height:1.6px;background:#333;opacity:.8"></div>
  <div class="a" style="left:24.5px;top:18.5px;width:68px;height:11px;background:repeating-linear-gradient(180deg,#555 0 1px,transparent 1px 2.2px);opacity:.45"></div>
  <div class="a" style="left:24.5px;top:33px;width:65px;height:12px;background:repeating-linear-gradient(180deg,#555 0 1px,transparent 1px 2.2px);opacity:.45"></div>
</div>
<!-- thumb 19 selected -->
<div class="a" style="left:25px;top:539px;width:112px;height:64px;border:1.5px solid #e4883a;border-radius:3px"></div>
<div class="a" style="left:27px;top:541px;transform-origin:0 0;transform:scale(0.15675);width:689px;height:387px;background:linear-gradient(180deg,#f8fcfd,#f3fbfc);box-shadow:0 0 2px rgba(0,0,0,.22)">
  <div class="a" style="left:0;top:0;width:689px;height:60.5px;background:linear-gradient(180deg,rgba(40,90,255,.25),rgba(0,10,90,.22)),linear-gradient(90deg,#1a4ef0 0%,#1b58f6 30%,#1d68fd 55%,#1f74fa 80%)"></div>
  <div class="a" style="left:560px;top:0;width:129px;height:60.5px;background:linear-gradient(180deg,#0bc9d6 0%,#0fa9e3 55%,#1690ee 100%);-webkit-mask-image:linear-gradient(90deg,transparent 0,#000 33%)"></div>
  <div class="a" style="left:626px;top:297px;width:30px;height:89px;background:#d2f1f4;opacity:.8"></div>
  <div class="a" style="left:656px;top:346px;width:27px;height:40px;background:#dcf4f6;opacity:.8"></div>
  <div class="t" style="left:636px;top:365px;font-size:8.5px;color:#9aa4b8">19</div>
<svg class="a" style="left:404px;top:0;filter:blur(.35px)" width="199" height="206" viewBox="0 0 199 206">
<defs>
<linearGradient id="sky1" x1="0" y1="0" x2="0.5" y2="1"><stop offset="0" stop-color="#3463b0"/><stop offset=".45" stop-color="#6f98cc"/><stop offset="1" stop-color="#c8d8ea"/></linearGradient>
<linearGradient id="bld1" x1="0" y1="0" x2="1" y2="0.2"><stop offset="0" stop-color="#a48a68"/><stop offset=".35" stop-color="#d2bc96"/><stop offset=".7" stop-color="#d8c4a2"/><stop offset="1" stop-color="#c8a880"/></linearGradient>
<linearGradient id="top1" x1="0" y1="0" x2="1" y2="0"><stop offset="0" stop-color="#9c8060"/><stop offset=".6" stop-color="#c8a070"/><stop offset="1" stop-color="#d08848"/></linearGradient>
<linearGradient id="grd1" x1="0" y1="0" x2="0" y2="1"><stop offset="0" stop-color="#9a7a5c"/><stop offset="1" stop-color="#7e5a3c"/></linearGradient>
</defs>
<rect width="199" height="206" fill="url(#sky1)"/>
<path d="M0 126 Q8 116 18 122 Q24 118 30 126 L30 150 L0 150Z" fill="#8a7040"/>
<path d="M0 146 L30 146 L30 176 L0 172Z" fill="#4a4a34"/>
<path d="M28 178 L28 92 Q28 70 29 54 Q38 40 47 33 Q60 25 71 20.5 Q82 17 91 15.8 L93 17 L104 39.5 L109 52 L117 54.5 L117 66 L121.6 91.6 L123 93 L155.6 91 L172 84.5 L199 83.7 L199 182 L28 182Z" fill="url(#bld1)"/>
<path d="M29 56 Q38 40 47 33 Q60 25 71 20.5 Q82 17 91 15.8 L93 17 L104 39.5 L109 52 L117 54.5 L117 66 L29 74Z" fill="url(#top1)"/>
<path d="M29 55 Q40 38 55 30 Q75 19 92 15.5 L93 18 Q75 23 58 32 Q42 42 30 60Z" fill="#5a4434"/>
<g fill="#7a5a40" opacity=".7"><rect x="40" y="42" width="3" height="6"/><rect x="52" y="36" width="3" height="6"/><rect x="64" y="31" width="3" height="6"/><rect x="76" y="27" width="3" height="6"/><rect x="86" y="25" width="3" height="6"/></g>
<path d="M29 66 L117 56 L117 66 L29 76Z" fill="#b89c78"/>
<path d="M29 74 L117 66 L117 70 L29 78Z" fill="#7a6048"/>
<g fill="#4a3a2e">
<rect x="43" y="78" width="6" height="16" rx="3"/><rect x="55" y="77" width="6" height="17" rx="3"/><rect x="66" y="76" width="6" height="18" rx="3"/>
<rect x="30" y="112" width="6" height="24" rx="3"/><rect x="41" y="112" width="7" height="24" rx="3"/><rect x="52" y="112" width="7" height="24" rx="3"/><rect x="65" y="112" width="8" height="24" rx="4"/><rect x="80" y="111" width="8" height="25" rx="4"/><rect x="99" y="111" width="8" height="25" rx="4"/><rect x="119" y="111" width="8" height="25" rx="4"/><rect x="146" y="112" width="8" height="23" rx="4"/><rect x="189" y="112" width="8" height="23" rx="4"/>
<rect x="30" y="152" width="6" height="27" rx="3"/><rect x="42" y="152" width="7" height="27" rx="3"/><rect x="52" y="152" width="8" height="27" rx="4"/><rect x="65" y="152" width="9" height="27" rx="4"/><rect x="80" y="152" width="9" height="27" rx="4"/><rect x="98" y="152" width="10" height="27" rx="5"/><rect x="119" y="152" width="10" height="27" rx="5"/><rect x="141" y="152" width="10" height="27" rx="5"/><rect x="166" y="152" width="11" height="27" rx="5"/><rect x="187" y="152" width="10" height="27" rx="5"/>
</g>
<g fill="#e0e8f0"><rect x="81" y="77" width="7" height="17" rx="3.5"/><rect x="98" y="76" width="8" height="18" rx="4"/><rect x="166" y="112" width="11" height="20" rx="5"/></g>
<rect x="164" y="132" width="14" height="12" fill="#e8e4dc"/>
<g fill="#8a7052" opacity=".75"><rect x="28" y="136" width="171" height="3"/><rect x="28" y="144" width="171" height="5"/><rect x="28" y="96" width="95" height="4"/><rect x="123" y="94" width="76" height="3"/></g>
<g fill="#e4d6bc" opacity=".6"><rect x="37" y="112" width="3" height="24"/><rect x="60" y="112" width="4" height="24"/><rect x="89" y="111" width="9" height="25"/><rect x="108" y="111" width="10" height="25"/><rect x="130" y="111" width="14" height="25"/><rect x="90" y="152" width="7" height="27"/><rect x="109" y="152" width="9" height="27"/><rect x="131" y="152" width="9" height="27"/><rect x="153" y="152" width="12" height="27"/></g>
<path d="M0 170 L28 176 L199 178 L199 206 L0 206Z" fill="url(#grd1)"/>
<path d="M0 182 Q40 188 80 198 L60 199 Q25 192 0 188Z" fill="#d4c8bc" opacity=".65"/>
<g fill="#4a3a2a" opacity=".75"><rect x="64" y="174" width="12" height="9" rx="2"/><rect x="78" y="175" width="14" height="8" rx="2"/><rect x="94" y="175" width="18" height="8" rx="2"/><rect x="165" y="175" width="12" height="8" rx="2"/><rect x="180" y="175" width="14" height="8" rx="2"/></g>
<g fill="#e0d8d0" opacity=".8"><rect x="22" y="168" width="12" height="4" rx="1"/><rect x="160" y="172" width="8" height="5" rx="1"/></g>
</svg>
<svg class="a" style="left:349px;top:214px;filter:blur(.35px)" width="271" height="168" viewBox="0 0 271 168">
<defs>
<linearGradient id="city2" x1="0" y1="0" x2="0" y2="1"><stop offset="0" stop-color="#d4ccbc"/><stop offset="1" stop-color="#bdb3a2"/></linearGradient>
<linearGradient id="rim2" x1="0" y1="0" x2="1" y2="0"><stop offset="0" stop-color="#c4b49a"/><stop offset=".5" stop-color="#b49a7c"/><stop offset="1" stop-color="#9c7a5e"/></linearGradient>
</defs>
<rect width="271" height="168" fill="url(#city2)"/>
<g fill="#e8e2d6"><rect x="2" y="2" width="30" height="8"/><rect x="0" y="14" width="20" height="6"/><rect x="20" y="22" width="18" height="6"/><rect x="48" y="18" width="24" height="10"/><rect x="86" y="16" width="14" height="16"/><rect x="112" y="4" width="30" height="8"/><rect x="150" y="14" width="30" height="10"/><rect x="128" y="22" width="16" height="10"/></g>
<g fill="#7a6a5a" opacity=".8"><path d="M38 10 L46 8 L84 34 L76 38Z"/><rect x="62" y="4" width="14" height="10"/><rect x="99" y="18" width="18" height="14"/><rect x="158" y="4" width="8" height="10"/><rect x="0" y="40" width="6" height="18"/></g>
<path d="M0 28 L22 32 L24 40 L0 38Z" fill="#c89860"/>
<rect x="6" y="38" width="18" height="18" fill="#b8a888"/>
<rect x="25" y="36" width="11" height="14" fill="#3a4a38"/>
<path d="M198 0 L271 0 L271 40 L236 36 L222 26 L200 22Z" fill="#5e6844"/>
<path d="M230 22 L271 18 L271 80 L246 76 L232 50Z" fill="#7c7c52"/>
<path d="M250 28 Q262 34 266 48 L258 52 Q254 40 246 36Z" fill="#a88a50" opacity=".8"/>
<ellipse cx="208" cy="17" rx="11" ry="4.5" fill="#ece6da"/>
<path d="M180 30 L230 28 L228 36 L178 38Z" fill="#a4a090" opacity=".8"/>
<path d="M0 58 L36 56 L36 142 L0 146Z" fill="#8e8c88"/>
<path d="M14 90 Q18 115 34 130 L26 132 Q10 118 8 96Z" fill="#dcdad4" opacity=".85"/>
<path d="M218 86 Q250 88 264 100 Q270 118 250 132 L200 142 L214 110Z" fill="#c8c0ae"/>
<path d="M236 66 Q268 84 266 112 Q262 130 236 138 L230 136 Q256 126 260 110 Q262 88 232 72Z" fill="#e4ded2"/>
<path d="M246 80 Q262 96 258 118 L252 116 Q252 96 240 86Z" fill="#5e6444"/>
<path d="M34 84 Q36 48 132 38 Q200 36 222 56 L232 100 Q220 136 133 138 Q40 136 34 100Z" fill="url(#rim2)"/>
<path d="M34 100 Q40 136 133 138 Q220 136 232 100 L232 108 Q220 146 133 146 Q40 144 34 108Z" fill="#5a4030"/>
<g fill="#3a2a22">
<rect x="40" y="108" width="4" height="8" rx="2"/><rect x="49" y="113" width="4" height="9" rx="2"/><rect x="58" y="117" width="4" height="9" rx="2"/><rect x="67" y="120" width="4" height="10" rx="2"/><rect x="77" y="123" width="5" height="10" rx="2"/><rect x="87" y="124" width="5" height="11" rx="2"/><rect x="97" y="125" width="5" height="11" rx="2"/><rect x="107" y="126" width="5" height="11" rx="2"/><rect x="117" y="126" width="5" height="11" rx="2"/><rect x="127" y="126" width="5" height="11" rx="2"/><rect x="137" y="126" width="5" height="11" rx="2"/><rect x="147" y="125" width="5" height="11" rx="2"/><rect x="157" y="124" width="5" height="11" rx="2"/><rect x="167" y="122" width="5" height="11" rx="2"/><rect x="177" y="120" width="5" height="10" rx="2"/><rect x="187" y="117" width="4" height="10" rx="2"/><rect x="196" y="113" width="4" height="9" rx="2"/><rect x="205" y="108" width="4" height="9" rx="2"/><rect x="213" y="102" width="4" height="8" rx="2"/>
<rect x="44" y="96" width="4" height="7" rx="2"/><rect x="54" y="101" width="4" height="7" rx="2"/><rect x="64" y="105" width="4" height="7" rx="2"/><rect x="75" y="108" width="4" height="7" rx="2"/><rect x="86" y="110" width="4" height="7" rx="2"/><rect x="98" y="111" width="4" height="7" rx="2"/><rect x="110" y="112" width="4" height="7" rx="2"/><rect x="122" y="112" width="4" height="7" rx="2"/><rect x="134" y="112" width="4" height="7" rx="2"/><rect x="146" y="111" width="4" height="7" rx="2"/><rect x="158" y="110" width="4" height="7" rx="2"/><rect x="170" y="108" width="4" height="7" rx="2"/><rect x="182" y="106" width="4" height="7" rx="2"/><rect x="194" y="102" width="4" height="7" rx="2"/><rect x="205" y="96" width="4" height="7" rx="2"/>
</g>
<path d="M40 82 Q60 52 133 48 Q200 48 218 70 Q205 60 133 58 Q70 60 46 84Z" fill="#7a5c48"/>
<ellipse cx="133" cy="84" rx="74" ry="22" fill="#a48a6c"/>
<ellipse cx="133" cy="86" rx="62" ry="16" fill="#b89e80"/>
<g stroke="#6a5040" stroke-width="1.1" fill="none" opacity=".8"><path d="M80 84 Q133 70 186 84 M84 92 Q133 80 182 92 M96 78 L98 96 M112 75 L113 98 M128 74 L128 99 M144 74 L144 99 M160 75 L159 98 M174 78 L172 96"/></g><g fill="#e0d2bc" opacity=".55"><ellipse cx="100" cy="88" rx="8" ry="3"/><ellipse cx="150" cy="90" rx="10" ry="3"/><ellipse cx="125" cy="80" rx="9" ry="2.5"/></g>
<g fill="#3a2a22" opacity=".85"><path d="M56 70 L60 64 L62 72Z M63 67 L67 61 L69 69Z M70 64 L74 59 L76 67Z M77 62 L81 57 L83 65Z M84 60 L88 56 L90 64Z M91 59 L95 55 L97 63Z"/><rect x="104" y="62" width="4" height="5"/><rect x="114" y="61" width="4" height="5"/><rect x="124" y="60" width="4" height="5"/><rect x="134" y="60" width="4" height="5"/><rect x="144" y="60" width="4" height="5"/><rect x="154" y="61" width="4" height="5"/><rect x="164" y="62" width="4" height="5"/><path d="M176 64 L178 70 L174 70Z M184 66 L186 72 L182 72Z M192 69 L194 75 L190 75Z M200 73 L202 79 L198 79Z"/></g>
<path d="M36 84 Q38 54 132 46 L132 42 Q40 48 34 84Z" fill="#d8ccb8"/>
<rect x="221" y="54" width="11" height="51" fill="#8a5a3c"/><rect x="221" y="54" width="4" height="51" fill="#a06e4a"/>
<g fill="#7a8a9a" opacity=".8"><rect x="40" y="128" width="14" height="6"/><rect x="66" y="131" width="14" height="6"/><rect x="92" y="134" width="16" height="6"/><rect x="112" y="135" width="18" height="6"/></g>
<path d="M0 140 L271 132 L271 142 L0 150Z" fill="#5e5a52"/>
<path d="M0 148 L271 140 L271 168 L0 168Z" fill="#66704a"/>
<path d="M40 160 L120 150 L140 154 L60 166Z" fill="#c8c0a0" opacity=".7"/>
<g fill="#3e4a2c"><circle cx="20" cy="148" r="15"/><circle cx="36" cy="140" r="8"/><circle cx="76" cy="160" r="10"/><circle cx="112" cy="158" r="8"/><circle cx="150" cy="154" r="8"/><circle cx="180" cy="142" r="14"/><circle cx="215" cy="156" r="10"/><circle cx="245" cy="140" r="13"/><circle cx="262" cy="154" r="10"/></g>
</svg>

<div class="st" style="top:74px">By 200 BC, natural concrete made from<br>volcanic ash, lime, and gravel had begun<br>to emerge. This material was used to<br>cast concrete vaults, creating domed<br>ceilings and cross vaults.</div>
<div class="st" style="top:174.5px">The image shows the Roman<br>Colo’sseum, which was built between 70<br>and 82 AD. The Colosseum has an<br>elliptical floor plan, with a long axis of<br>188 meters and a short axis of 156<br>meters. It features 60 rows of seating<br>and could accommodate between 50,000<br>and 80,000 spectators. Its exterior walls<br>rise to a height of 48.5 meters, with four<br>levels; the lower level consists of<br>arcades, while the upper level is solid<br>walls.</div>

</div>
<!-- RIGHT PANE -->
<div class="a" style="left:878px;top:159px;width:1px;height:474px;background:#dcdfe1"></div>
<div class="a" style="left:1022px;top:159px;width:1px;height:474px;background:#dcdfe1"></div>
<svg class="a" style="left:870px;top:160px" width="9" height="8" viewBox="0 0 9 8"><path d="M2 6 L4.5 3 L7 6Z" fill="#555"/></svg>
<div class="a" style="left:872px;top:265px;width:3px;height:30px;background:#d2d4d6;border-radius:2px"></div>
<div class="t" style="left:890px;top:169px;font-size:7.5px;color:#333">动画窗格</div>
<svg class="a" style="left:922px;top:171px" width="8" height="5" viewBox="0 0 8 5"><path d="M2 1 L4 3.5 L6 1Z" fill="#555"/></svg>
<svg class="a" style="left:984px;top:167px" width="28" height="12" viewBox="0 0 28 12"><g stroke="#555" stroke-width=".9" fill="none"><path d="M6 2 L10 6 L8.5 7 L7.5 9 L3 4.5 L5 3.5Z M4.5 7.5 L2 10"/><path d="M18.5 2.5 L25.5 9.5 M25.5 2.5 L18.5 9.5"/></g></svg>
<svg class="a" style="left:889px;top:186px" width="12" height="11" viewBox="0 0 12 11"><rect x="1" y="1" width="6" height="6" fill="#3a70d0"/><rect x="3" y="3" width="6" height="6" fill="#f0b040"/><path d="M8 6 L11 9 L9 9.5 L8 11Z" fill="#555"/></svg>
<div class="t" style="left:904px;top:187.5px;font-size:7px;color:#444">选择窗格</div>
<div class="a" style="left:888px;top:205px;width:45px;height:12px;border:1px solid #e3e6e8;border-radius:3px;background:#eceff1"></div>
<div class="a" style="left:938px;top:205px;width:45px;height:12px;border:1px solid #e3e6e8;border-radius:3px;background:#eceff1"></div>
<div class="a" style="left:988px;top:205px;width:24px;height:12px;border:1px solid #e3e6e8;border-radius:3px;background:#eceff1"></div>
<div class="t" style="left:894px;top:207.5px;font-size:6.8px;color:#aaa">添加效果</div>
<div class="t" style="left:944px;top:207.5px;font-size:6.8px;color:#aaa">智能动画</div>
<div class="t" style="left:993px;top:207.5px;font-size:6.8px;color:#aaa">删除</div>
<svg class="a" style="left:924px;top:209px" width="64" height="4" viewBox="0 0 64 4"><path d="M1 1 L3 3 L5 1 M51 1 L53 3 L55 1" stroke="#bbb" stroke-width=".8" fill="none"/></svg>
<div class="t" style="left:888px;top:236.5px;font-size:7px;color:#999">修改效果</div>
<div class="t" style="left:888px;top:253.5px;font-size:7px;color:#aaa">开始</div>
<div class="t" style="left:888px;top:271px;font-size:7px;color:#aaa">属性</div>
<div class="t" style="left:888px;top:288.5px;font-size:7px;color:#aaa">速度</div>
<div class="a" style="left:918px;top:250px;width:93px;height:13px;border:1px solid #e2e5e6;border-radius:3px;background:#eaedee"></div>
<div class="a" style="left:918px;top:268px;width:93px;height:13px;border:1px solid #e2e5e6;border-radius:3px;background:#eaebea"></div>
<div class="a" style="left:918px;top:285px;width:93px;height:13px;border:1px solid #e2e4e3;border-radius:3px;background:#eae9e7"></div>
<svg class="a" style="left:1002px;top:255px" width="6" height="40" viewBox="0 0 6 40"><path d="M1 1 L3 3 L5 1 M1 19 L3 21 L5 19 M1 36 L3 38 L5 36" stroke="#c5c5c5" stroke-width=".8" fill="none"/></svg>
<div class="a" style="left:888px;top:303px;width:123px;height:258px;background:#fff;border:1px solid #e6e6e4;border-radius:2px"></div>
<div class="t" style="left:893px;top:306.5px;font-size:6.5px;color:#9a9a9a;line-height:10px">选中幻灯片的某个元素，然后单击“添<br>加效果”添加动画。</div>
<div class="t" style="left:888px;top:569px;font-size:6.8px;color:#aaa">重新排序</div>
<div class="a" style="left:919px;top:566px;width:13px;height:13px;border:1px solid #e2e2e0;border-radius:3px"></div>
<div class="a" style="left:935px;top:566px;width:13px;height:13px;border:1px solid #e2e2e0;border-radius:3px"></div>
<svg class="a" style="left:919px;top:566px" width="29" height="13" viewBox="0 0 29 13"><path d="M6.5 9.5 V3.5 M4 6 L6.5 3.5 L9 6 M22.5 3.5 V9.5 M20 7 L22.5 9.5 L25 7" stroke="#bbb" stroke-width="1" fill="none"/></svg>
<svg class="a" style="left:871px;top:587px" width="7" height="26" viewBox="0 0 7 26"><path d="M2 3 L3.5 4.8 L5 3Z" fill="#666"/><path d="M2.2 12 L3.5 10.8 L4.8 12 M2.2 13.5 L3.5 14.7 L4.8 13.5 M2.2 20 L3.5 18.8 L4.8 20 M2.2 21.5 L3.5 22.7 L4.8 21.5" stroke="#777" stroke-width=".7" fill="none"/></svg>
<div class="a" style="left:888px;top:596px;width:30px;height:13px;border:1px solid #e4e4e2;border-radius:3px"></div>
<svg class="a" style="left:891px;top:598px" width="10" height="10" viewBox="0 0 10 10"><circle cx="5" cy="5" r="4" stroke="#bbb" stroke-width=".8" fill="none"/><path d="M4 3.3 L6.5 5 L4 6.7Z" fill="#bbb"/></svg>
<div class="t" style="left:902px;top:599px;font-size:6.8px;color:#aaa">播放</div>
<div class="a" style="left:923px;top:596px;width:49px;height:13px;border:1px solid #e0e0de;border-radius:3px;background:#fff"></div>
<svg class="a" style="left:926px;top:598px" width="10" height="10" viewBox="0 0 10 10"><rect x="1" y="1" width="7" height="6" stroke="#555" stroke-width=".8" fill="none"/><path d="M4.5 7 V9.5 M3 9.5 H6" stroke="#555" stroke-width=".8"/><circle cx="7.5" cy="7" r="2.3" fill="#2aa052"/></svg>
<div class="t" style="left:937px;top:599px;font-size:6.8px;color:#333">幻灯片播放</div>
<div class="a" style="left:890px;top:616px;width:8px;height:8px;background:#2c6de0;border-radius:1.5px"></div>
<svg class="a" style="left:890px;top:616px" width="8" height="8" viewBox="0 0 8 8"><path d="M1.8 4 L3.4 5.6 L6.3 2.5" stroke="#fff" stroke-width="1" fill="none"/></svg>
<div class="t" style="left:900px;top:616.5px;font-size:6.8px;color:#333">自动预览</div>
<!-- right icon strip -->
<div class="a" style="left:1028px;top:182px;width:17px;height:17px;background:#dcdfe1;border-radius:3px"></div>
<svg class="a" style="left:1029px;top:165px" width="15" height="206" viewBox="0 0 15 206"><g stroke="#555" stroke-width=".9" fill="none">
<path d="M4 8 H11"/>
<path d="M7.5 20 L9 23.5 L12.5 23.8 L9.8 26 L10.7 29.5 L7.5 27.6 L4.3 29.5 L5.2 26 L2.5 23.8 L6 23.5Z"/>
<path d="M3 45.5 H12 M3 49.5 H12"/><circle cx="5.5" cy="45.5" r="1.5" fill="#eee"/><circle cx="9.5" cy="49.5" r="1.5" fill="#eee"/>
<path d="M3.5 65 H9.5 V71 H3.5Z M6 71 V73.5 H12 V67.5 H9.5"/>
<path d="M3.5 87 H11.5 V92 M3.5 87 V95 H7"/><circle cx="9" cy="93" r="2.3"/>
<path d="M4 108 L11 117 M11 108 L4 117"/><circle cx="4" cy="108" r="1.3" fill="#555"/><circle cx="11" cy="117" r="1.3" fill="#555"/>
<path d="M3.5 129 L7.5 130.5 V138 L3.5 136.5Z M7.5 130.5 H12 V138 H7.5"/><circle cx="10" cy="135" r="1.3"/>
<circle cx="7.5" cy="133.5" r="0" /><circle cx="7.5" cy="156.5" r="4.5"/><path d="M6 155 A1.5 1.5 0 1 1 7.5 156.5 V157.5 M7.5 159 V159.5"/>
<path d="M3.5 174 L6 172.5 H9 L11.5 174 L10.5 176.5 V181 H4.5 V176.5Z"/>
</g><g fill="#555"><circle cx="4" cy="200.5" r="1.2"/><circle cx="7.5" cy="200.5" r="1.2"/><circle cx="11" cy="200.5" r="1.2"/></g></svg>
<!-- NOTES / STATUS -->
<div class="a" style="left:155px;top:616px;width:723px;height:1px;background:#dedcd8"></div>
<div class="t" style="left:161px;top:621px;font-size:7px;color:#999">单击此处添加备注</div>
<div class="a" style="left:1px;top:633px;width:1049px;height:1px;background:#e2e0dc"></div>
<div class="t" style="left:8px;top:636.5px;font-size:7.1px;color:#555">幻灯片 19 / 75</div>
<div class="a" style="left:57px;top:635px;width:1px;height:10px;background:#dcdad6"></div>
<svg class="a" style="left:64px;top:635px" width="10" height="10" viewBox="0 0 10 10"><path d="M2 3 L3 1 H7 L8 3 L7 4 V8 H3 V4Z" stroke="#555" stroke-width=".8" fill="none"/><circle cx="7.5" cy="7.5" r="1.5" fill="#555"/></svg>
<div class="t" style="left:76px;top:636.5px;font-size:7px;color:#444">商务风城市纸条职场办公</div>
<svg class="a" style="left:668px;top:634px" width="380" height="12" viewBox="0 0 380 12"><g stroke="#555" stroke-width=".9" fill="none">
<path d="M3 10 H8 M5.5 1.5 A3.5 3.5 0 0 1 5.5 8.5 A3.5 3.5 0 0 1 5.5 1.5"/>
<path d="M41.5 7 L43 8.5 L44.5 7 M88 7 L89.5 8.5 L91 7"/>
<path d="M61 3 H69 M61 6 H69 M61 9 H69 M59 3 H60 M59 6 H60 M59 9 H60"/>
<path d="M102.5 2 H111.5 V8.5 H106 L103.5 10.5 V8.5 H102.5Z"/>
<path d="M141 2.5 H149 V9.5 H141Z M144 2.5 V9.5"/>
<path d="M158.5 2.5 H162 V5.5 H158.5Z M164 2.5 H167.5 V5.5 H164Z M158.5 7 H162 V10 H158.5Z M164 7 H167.5 V10 H164Z"/>
<path d="M176.5 2.5 L181 3.5 L185.5 2.5 V9.5 L181 10.5 L176.5 9.5Z M181 3.5 V10.5"/>
<path d="M213 7 L214.5 8.5 L216 7 M273 7 L274.5 8.5 L276 7"/>
<path d="M232 4 V2.5 H234 M238 2.5 H240 V4 M240 8 V9.5 H238 M234 9.5 H232 V8 M234.5 6 H237.5"/>
<path d="M287 6 H294 M366 6 H373 M369.5 2.5 V9.5"/>
</g>
<rect x="138.5" y="0" width="13" height="12" fill="#d6d8d8" rx="2" opacity=".6"/>
<path d="M141 2.5 H149 V9.5 H141Z M144 2.5 V9.5" stroke="#555" stroke-width=".9" fill="none"/>
<rect x="198" y="1" width="10" height="10" fill="#ef7b1d" rx="1"/><path d="M201.5 3.5 L205 6 L201.5 8.5Z" fill="#fff"/>
<path d="M302 6 H328" stroke="#3a78d8" stroke-width="1.3"/><path d="M328 6 H360" stroke="#c8c8c8" stroke-width=".8"/><circle cx="329" cy="6" r="1.6" fill="#fff" stroke="#999" stroke-width=".6"/>
</svg>
<div class="t" style="left:680px;top:636.5px;font-size:7px;color:#444">智能美化</div>
<div class="t" style="left:740px;top:636.5px;font-size:7px;color:#444">备注</div>
<div class="t" style="left:781px;top:636.5px;font-size:7px;color:#444">批注</div>
<div class="t" style="left:920px;top:636.5px;font-size:7px;color:#555">98%</div>

<!-- TASKBAR -->
<div class="a" style="left:1px;top:647px;width:1051px;height:22px;background:#3a2d27"></div>
<div class="a" style="left:1px;top:647px;width:26px;height:22px;background:#2f2620"></div>
<svg class="a" style="left:9px;top:653px" width="11" height="11" viewBox="0 0 11 11"><g fill="#f4f4f4"><path d="M0 1.5 L4.8 0.8 V5 H0Z M5.6 0.7 L11 0 V5 H5.6Z M0 5.8 H4.8 V10 L0 9.3Z M5.6 5.8 H11 V11 L5.6 10.2Z"/></g></svg>
<div class="a" style="left:27px;top:647px;width:157px;height:22px;background:#f1f0ef"></div>
<svg class="a" style="left:32px;top:652px" width="12" height="12" viewBox="0 0 12 12"><circle cx="7" cy="5" r="3.6" stroke="#333" stroke-width="1" fill="none"/><path d="M4.5 7.5 L1 11" stroke="#333" stroke-width="1.2"/></svg>
<div class="t" style="left:49px;top:654px;font-size:7.5px;color:#333">搜索</div>
<svg class="a" style="left:144px;top:649px" width="38" height="18" viewBox="0 0 38 18"><path d="M14 2 L16 8 L22 10 L16 12 L14 18 L12 12 L6 10 L12 8Z" fill="#f5c430"/><path d="M24 5 L25 7.5 L27.5 8.5 L25 9.5 L24 12 L23 9.5 L20.5 8.5 L23 7.5Z" fill="#f2b830"/><path d="M5 12 L6 14 L8 15 L6 16 L5 18 L4 16 L2 15 L4 14Z" fill="#3a90e0"/><circle cx="21" cy="3" r=".9" fill="#e9a0a0"/><circle cx="31" cy="14" r=".9" fill="#aaa"/></svg>
<svg class="a" style="left:192px;top:652px" width="13" height="12" viewBox="0 0 13 12"><g stroke="#ddd" stroke-width="1" fill="none"><path d="M1 1 H10 M1 11 H10"/><rect x="2.5" y="3.5" width="6" height="5"/><path d="M12 2 V10"/></g></svg>
<div class="a" style="left:319.5px;top:647px;width:26px;height:22px;background:#5c5450"></div>
<div class="a" style="left:345.5px;top:647px;width:27px;height:22px;background:#b0702e"></div>
<svg class="a" style="left:212px;top:648px" width="270" height="21" viewBox="0 0 270 21">
<circle cx="13.5" cy="10" r="6.5" fill="#1a8ad0"/><path d="M8 10 A5.5 5.5 0 0 1 19 9 Q15 6 11 9 Q10 13 15 15 Q10 16 8 10Z" fill="#3ed07a"/><path d="M10.5 10.5 Q13 7.5 17 9" stroke="#8be0ff" stroke-width="1.5" fill="none"/>
<rect x="33" y="4" width="13" height="12" rx="2" fill="#1868c8"/><rect x="35" y="6" width="6" height="8" fill="#0b4ea8"/><circle cx="38" cy="10" r="2" fill="none" stroke="#fff" stroke-width="1"/>
<rect x="60" y="5" width="14" height="11" rx="1" fill="#f3c24a"/><rect x="60" y="5" width="14" height="3" fill="#d9a02a"/><rect x="62" y="9" width="10" height="4" fill="#3a70c0"/>
<circle cx="94" cy="10" r="6.5" fill="#e0402c"/><path d="M94 10 L99.6 13.2 A6.5 6.5 0 0 1 88.4 13.2Z" fill="#3aa84a"/><path d="M94 3.5 A6.5 6.5 0 0 1 99.6 13.2 L94 10Z" fill="#f6c026"/><circle cx="94" cy="10" r="3" fill="#fff"/><circle cx="94" cy="10" r="2.2" fill="#3a7ae0"/>
<path d="M114 5 L127 5 L125 15 L122 15 L120.5 10 L119 15 L116 15Z" fill="#e8402c"/><path d="M117 7.5 L120.5 12.5 L124 7.5" stroke="#fdd" stroke-width="1" fill="none"/>
<ellipse cx="145" cy="9" rx="5" ry="4" fill="#3ec45a"/><ellipse cx="150" cy="12" rx="4.5" ry="3.5" fill="#e8f8ea"/>
<rect x="167" y="4" width="13" height="12" rx="2" fill="#c0303a"/><circle cx="176" cy="9" r="4" fill="#1a2a6a"/><path d="M168 12 Q172 6 178 8" stroke="#fff" stroke-width="1.2" fill="none"/>
<rect x="195" y="6" width="12" height="9" fill="#c5ccd5"/><rect x="197" y="4" width="10" height="7" fill="#e7ecf0"/><rect x="199" y="8" width="6" height="4" fill="#8a9aa8"/>
<rect x="220" y="4" width="13" height="13" rx="2" fill="#d62a2a"/><path d="M222.5 7 L224.5 10 L226.5 7 M224.5 10 V13 M229 7 A2.5 3 0 1 1 229 13 A2.5 3 0 1 1 229 7" stroke="#fff" stroke-width="1" fill="none"/>
<rect x="247" y="4" width="13" height="13" rx="2" fill="#1c6ed6"/><path d="M248 12 L251 8 L253.5 11 L256 8 L259 12" stroke="#fff" stroke-width="1.3" fill="none"/>
<g fill="#5a86dc"><rect x="60" y="19.5" width="14" height="1.5"/><rect x="87" y="19.5" width="14" height="1.5"/><rect x="114" y="19.5" width="14" height="1.5"/><rect x="167" y="19.5" width="14" height="1.5"/><rect x="194" y="19.5" width="14" height="1.5"/><rect x="221" y="19.5" width="14" height="1.5"/><rect x="248" y="19.5" width="14" height="1.5"/></g>
</svg>
<svg class="a" style="left:944px;top:652px" width="40" height="12" viewBox="0 0 40 12"><path d="M3 8 L6.5 4.5 L10 8" stroke="#eee" stroke-width="1" fill="none"/><rect x="18" y="2" width="4" height="6" rx="2" fill="#eee"/><path d="M16.5 7 Q20 11 23.5 7 M20 9.5 V11.5" stroke="#eee" stroke-width=".9" fill="none"/></svg>
<div class="t" style="left:971px;top:653px;font-size:9px;color:#f2f2f2">中</div>
<div class="t" style="left:994px;top:649px;font-size:7px;color:#eee">14:27</div>
<div class="t" style="left:986px;top:659.5px;font-size:7.4px;color:#eee">2025/4/15</div>
<svg class="a" style="left:1027px;top:652px" width="13" height="12" viewBox="0 0 13 12"><path d="M1.5 1.5 H11.5 V8.5 H6 L3.5 11 V8.5 H1.5Z" stroke="#eee" stroke-width=".9" fill="none"/></svg>

<!-- PARTICIPANTS -->
<div class="a" style="left:1057px;top:18px;width:209px;height:711px;background:#2d3033"></div>
<div class="a" style="left:1057px;top:135px;width:209px;height:2px;background:#1e2023"></div>
<div class="a" style="left:1057px;top:254px;width:209px;height:2px;background:#1e2023"></div>
<div class="a" style="left:1057px;top:373px;width:209px;height:2px;background:#1e2023"></div>
<div class="a" style="left:1057px;top:492px;width:209px;height:2px;background:#1e2023"></div>
<div class="a" style="left:1057px;top:610px;width:209px;height:1px;background:#1e2023"></div>
<!-- P1 -->
<svg class="a" style="left:1138px;top:53px" width="47" height="47" viewBox="0 0 47 47"><defs><clipPath id="c1"><circle cx="23.5" cy="23.5" r="23.5"/></clipPath></defs><g clip-path="url(#c1)">
<rect width="47" height="47" fill="#d8d4d0"/><rect x="0" y="0" width="14" height="47" fill="#c9b8a8"/><rect x="34" y="0" width="13" height="47" fill="#b8bcc4"/><rect x="0" y="22" width="12" height="6" fill="#8a6a58"/>
<path d="M14 47 Q14 18 23 12 Q33 18 33 47Z" fill="#1e1612"/><ellipse cx="23.5" cy="21" rx="5.5" ry="7" fill="#e8b8a0"/><path d="M12 47 Q14 31 23.5 30 Q33 31 35 47Z" fill="#e0c040"/><path d="M20 31 L23.5 38 L27 31" fill="#c89a30"/></g></svg>
<!-- P2 -->
<div class="a" style="left:1138.5px;top:171.5px;width:47px;height:47px;border-radius:50%;background:#080808"></div>
<div class="t" style="left:1141px;top:191px;font:bold italic 7.5px 'Liberation Sans',sans-serif;color:#f4f4f4;transform:rotate(-11deg);letter-spacing:.3px">AAYAN&nbsp;&nbsp;FF</div>
<!-- P3 -->
<svg class="a" style="left:1138px;top:290px" width="47" height="47" viewBox="0 0 47 47"><defs><clipPath id="c3"><circle cx="23.5" cy="23.5" r="23.5"/></clipPath></defs><g clip-path="url(#c3)">
<rect width="47" height="47" fill="#c8c8d0"/><rect width="12" height="47" fill="#e8a848"/><rect x="36" y="0" width="11" height="47" fill="#d0ccd4"/>
<path d="M8 47 Q9 30 23 27 Q37 30 39 47Z" fill="#6a6e78"/><path d="M20 28 L23.5 40 L27 28Z" fill="#a8b8d0"/><ellipse cx="23" cy="18" rx="5" ry="6.5" fill="#b08060"/><path d="M17.5 15 Q23 8 28.5 15 L28 12 Q23 7 18 12Z" fill="#2a1e18"/><rect x="33" y="36" width="10" height="8" fill="#3a3a40"/></g></svg>
<!-- P4 -->
<svg class="a" style="left:1138px;top:409px" width="47" height="47" viewBox="0 0 47 47"><defs><clipPath id="c4"><circle cx="23.5" cy="23.5" r="23.5"/></clipPath></defs><g clip-path="url(#c4)">
<rect width="47" height="47" fill="#f6f2ee"/><path d="M18 8 Q28 4 34 12 Q30 18 24 17 Q20 20 16 16Z" fill="#e87898" opacity=".85"/><path d="M22 17 Q26 25 22 33 Q30 36 34 28 Q30 22 28 17Z" fill="#f0c8c0" opacity=".7"/><path d="M12 30 Q20 26 30 34 Q26 42 16 40Z" fill="#f2d8c8" opacity=".7"/><path d="M8 20 Q14 18 16 24" stroke="#e8b0b0" stroke-width="1" fill="none"/><path d="M30 38 Q36 34 40 40" stroke="#e8a090" stroke-width="1" fill="none"/></g></svg>
<!-- P5 -->
<svg class="a" style="left:1138px;top:527.5px" width="47" height="47" viewBox="0 0 47 47"><defs><clipPath id="c5"><circle cx="23.5" cy="23.5" r="23.5"/></clipPath></defs><g clip-path="url(#c5)">
<rect width="47" height="47" fill="#d8d0c0"/><rect x="0" y="0" width="12" height="47" fill="#c0b090"/><rect x="34" y="0" width="13" height="47" fill="#c8c0b0"/>
<path d="M12 47 Q12 28 23.5 25 Q35 28 35 47Z" fill="#151515"/><path d="M22 26 L23.5 36 L25 26Z" fill="#c8a040"/><ellipse cx="23.5" cy="16" rx="4.5" ry="6" fill="#b88868"/><path d="M19 13 Q23.5 7 28 13 L27.5 10 Q23.5 6 19.5 10Z" fill="#1a1410"/></g></svg>
<!-- labels -->
<div class="a" style="left:1059px;top:121px;width:117px;height:13px;background:#1d1f22"></div>
<div class="a" style="left:1059px;top:240px;width:98px;height:13px;background:#1d1f22"></div>
<div class="a" style="left:1059px;top:359px;width:69px;height:13px;background:#1d1f22"></div>
<div class="a" style="left:1059px;top:478px;width:55px;height:13px;background:#1d1f22"></div>
<div class="a" style="left:1059px;top:596px;width:117px;height:13px;background:#1d1f22"></div>
<svg class="a" style="left:1061px;top:122px" width="10" height="11" viewBox="0 0 10 11"><rect x="3" y="2" width="4" height="6" rx="2" fill="#ddd"/><path d="M2 6 Q5 10 8 6" stroke="#ddd" stroke-width=".8" fill="none"/><path d="M1.5 9.5 L8.5 1.5" stroke="#e05a30" stroke-width="1.1"/></svg>
<svg class="a" style="left:1061px;top:241px" width="10" height="11" viewBox="0 0 10 11"><rect x="3" y="2" width="4" height="6" rx="2" fill="#ddd"/><path d="M2 6 Q5 10 8 6" stroke="#ddd" stroke-width=".8" fill="none"/><path d="M1.5 9.5 L8.5 1.5" stroke="#e05a30" stroke-width="1.1"/></svg>
<svg class="a" style="left:1061px;top:360px" width="10" height="11" viewBox="0 0 10 11"><rect x="3" y="2" width="4" height="6" rx="2" fill="#ddd"/><path d="M2 6 Q5 10 8 6" stroke="#ddd" stroke-width=".8" fill="none"/><path d="M1.5 9.5 L8.5 1.5" stroke="#e05a30" stroke-width="1.1"/></svg>
<svg class="a" style="left:1061px;top:479px" width="10" height="11" viewBox="0 0 10 11"><rect x="3" y="2" width="4" height="6" rx="2" fill="#ddd"/><path d="M2 6 Q5 10 8 6" stroke="#ddd" stroke-width=".8" fill="none"/><path d="M1.5 9.5 L8.5 1.5" stroke="#e05a30" stroke-width="1.1"/></svg>
<svg class="a" style="left:1061px;top:597px" width="10" height="11" viewBox="0 0 10 11"><rect x="3" y="2" width="4" height="6" rx="2" fill="#ddd"/><path d="M2 6 Q5 10 8 6" stroke="#ddd" stroke-width=".8" fill="none"/><path d="M1.5 9.5 L8.5 1.5" stroke="#e05a30" stroke-width="1.1"/></svg>
<div class="t" style="left:1074px;top:123.5px;font-size:8.35px;color:#e6e6e6">Dr.Kiran Ahmad-TANG HQ</div>
<div class="t" style="left:1074px;top:242.5px;font-size:8.35px;color:#e6e6e6">GCTTaxila(SubComp)</div>
<div class="t" style="left:1074px;top:361.5px;font-size:8.35px;color:#e6e6e6">Mubeel Nasir</div>
<div class="t" style="left:1074px;top:480.5px;font-size:8.35px;color:#e6e6e6">唐风-王法</div>
<div class="t" style="left:1074px;top:598.5px;font-size:8.35px;color:#e6e6e6">Muhammad Imran (TANG</div>
<!-- P6 video -->
<svg class="a" style="left:1057px;top:611px;filter:blur(.35px)" width="209" height="118" viewBox="0 0 209 118">
<defs>
<linearGradient id="desk6" x1="0" y1="0" x2="0.3" y2="1"><stop offset="0" stop-color="#d4c8b0"/><stop offset="1" stop-color="#ece4d4"/></linearGradient>
<linearGradient id="shirt6" x1="0" y1="0" x2="1" y2="1"><stop offset="0" stop-color="#2e6ed0"/><stop offset="1" stop-color="#4a90e8"/></linearGradient>
</defs>
<rect width="209" height="118" fill="#c8985c"/>
<rect x="75" y="0" width="35" height="40" fill="#c6cbd0"/><rect x="193" y="0" width="16" height="30" fill="#c4ccd6"/>
<rect x="27" y="8" width="23" height="10" fill="#3c3632"/>
<path d="M0 34 L209 30 L209 118 L0 118Z" fill="url(#desk6)"/>
<path d="M175 38 L209 36 L209 64 L178 60Z" fill="#3a3e48"/>
<path d="M188 60 L209 58 L209 104 L192 100Z" fill="#d8dde6"/>
<g fill="#3272cc">
<path d="M2 38 Q12 30 24 33 Q36 30 46 34 Q58 30 70 31 L78 40 L72 58 L40 70 L20 72 L6 74 L2 60Z"/>
<path d="M2 50 Q16 46 24 58 L22 76 L8 80 L2 76Z" fill="#2c66c0"/>
<path d="M110 30 Q118 24 128 28 L130 42 L112 46Z"/>
<path d="M172 18 Q192 12 209 16 L209 40 L178 44Z" fill="#4088dc"/>
</g>
<g fill="#3a2a22"><circle cx="20" cy="22" r="6"/><circle cx="34" cy="26" r="5"/><circle cx="44" cy="25" r="4.5"/><circle cx="54" cy="26" r="4"/><circle cx="65" cy="22" r="3.5"/><circle cx="73" cy="20" r="3"/><circle cx="116" cy="22" r="3.5"/><circle cx="124" cy="22" r="4"/><circle cx="184" cy="17" r="3.5"/><circle cx="198" cy="18" r="3.5"/></g>
<g fill="#c08a6a"><ellipse cx="20" cy="27" rx="5" ry="6"/><ellipse cx="34" cy="30" rx="4.2" ry="5"/><ellipse cx="44" cy="29" rx="3.8" ry="4.5"/><ellipse cx="54" cy="30" rx="3.3" ry="4"/><ellipse cx="66" cy="26" rx="3" ry="3.5"/></g>
<g fill="#3a3e46">
<path d="M1 50 L11 52 L11 102 L1 104Z"/>
<path d="M22 44 L38 41 L38 82 L23 85Z"/><path d="M40 39 L55 37 L56 66 L41 69Z"/><path d="M56 35 L65 34 L65 54 L57 56Z"/><path d="M65 31 L72 30 L72 47 L66 48Z"/><path d="M72 28 L82 27 L82 42 L73 43Z"/><path d="M83 25 L90 24 L90 37 L84 38Z"/>
<path d="M70 52 L81 50 L81 116 L72 117Z"/><path d="M83 42 L92 40 L92 88 L84 90Z"/><path d="M92 36 L97 35 L97 66 L93 67Z"/><path d="M96 28 L104 26 L104 46 L97 48Z"/>
</g>
<g fill="#e8eef4"><rect x="4" y="60" width="2" height="4"/><rect x="31" y="55" width="3" height="5"/><rect x="48" y="49" width="2.5" height="4"/><rect x="61" y="42" width="2" height="3"/></g>
<g stroke="#34373e" stroke-width="1.3" fill="none"><path d="M36 84 L40 92 M24 96 L48 90 M52 67 L54 74 M44 78 L62 74 M80 116 L96 113 M88 88 L90 95 M84 98 L102 95 M64 55 L64 62 M96 66 L98 72"/></g>
<path d="M114 80 Q114 52 128 40 Q140 32 152 36 L156 60 L140 84 L126 92Z" fill="#3276d4"/>
<path d="M118 82 Q124 50 150 42 Q168 38 186 48 Q196 58 198 80 L198 98 L152 98 L124 92Z" fill="url(#shirt6)"/>
<ellipse cx="144" cy="24" rx="7.5" ry="10" fill="#c08c6c"/><path d="M136 18 Q144 8 152 18 L152 14 Q144 6 136 14Z" fill="#2a1e18"/>
<rect x="137" y="21" width="14" height="3" rx="1.5" fill="#8a7a70" opacity=".7"/>
<path d="M137 30 Q144 38 151 30 L151 34 Q144 40 137 34Z" fill="#3a2a22"/>
<ellipse cx="162" cy="27" rx="9.5" ry="13" fill="#c8906e"/><path d="M152 20 Q162 5 172 20 L172 15 Q162 4 152 15Z" fill="#1c1410"/><path d="M154 34 Q162 46 170 34 L170 40 Q162 48 154 40Z" fill="#3a2820"/>
<path d="M160 46 L164 46 L170 88 L165 94 L159 88Z" fill="#c42e24"/>
<path d="M107 80 L148 84 L146 98 L108 95Z" fill="#f2f2f0"/>
<ellipse cx="127" cy="88" rx="6" ry="4" fill="#d4a088"/>
<path d="M145 94 L197 92 L197 118 L145 118Z" fill="#252a36"/>
<ellipse cx="185" cy="103" rx="6" ry="4" fill="#d6c0b0"/>
<rect x="3" y="103" width="64" height="14" fill="#3c3c3a" opacity=".85"/>
<rect x="120" y="103" width="89" height="14" fill="#3c3c3a" opacity=".85"/>
</svg>
<svg class="a" style="left:1061px;top:715px" width="10" height="11" viewBox="0 0 10 11"><rect x="3" y="2" width="4" height="6" rx="2" fill="#ddd"/><path d="M2 6 Q5 10 8 6" stroke="#ddd" stroke-width=".8" fill="none"/><path d="M1.5 9.5 L8.5 1.5" stroke="#e05a30" stroke-width="1.1"/></svg>
<div class="t" style="left:1074px;top:716.5px;font-size:8.2px;color:#e6e6e6">Saad Farooq</div>
<div class="t" style="left:1180px;top:716.5px;font-size:8.5px;color:#e6e6e6">2025/04/15 14:27:05</div>
</body></html>
